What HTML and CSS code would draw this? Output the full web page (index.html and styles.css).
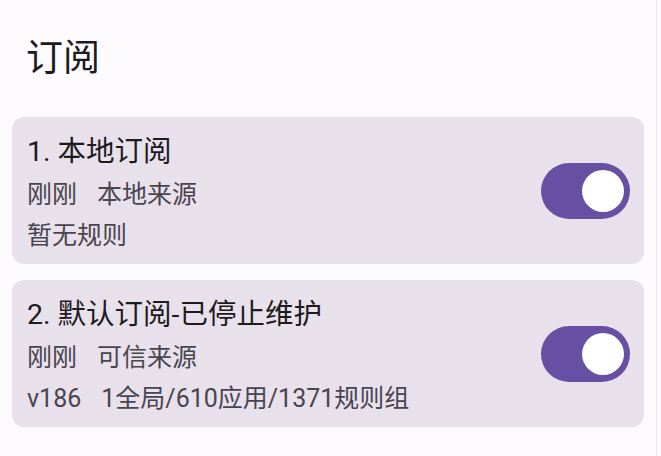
FILE: index.html
```html
<!DOCTYPE html>
<html lang="zh-CN">
<head>
    <meta charset="UTF-8">
    <meta name="viewport" content="width=device-width, initial-scale=1.0">
    <title>订阅</title>
    <link rel="stylesheet" href="styles.css">
</head>
<body>
    <div class="screen">
        <h1 class="page-title">订阅</h1>

        <div class="sub-list">
            <div class="sub-card">
                <div class="sub-info">
                    <div class="sub-name">1. 本地订阅</div>
                    <div class="sub-meta">
                        <span>刚刚</span>
                        <span>本地来源</span>
                    </div>
                    <div class="sub-meta">
                        <span>暂无规则</span>
                    </div>
                </div>
                <div class="switch on"><div class="thumb"></div></div>
            </div>

            <div class="sub-card">
                <div class="sub-info">
                    <div class="sub-name">2. 默认订阅-已停止维护</div>
                    <div class="sub-meta">
                        <span>刚刚</span>
                        <span>可信来源</span>
                    </div>
                    <div class="sub-meta">
                        <span>v186</span>
                        <span>1全局/610应用/1371规则组</span>
                    </div>
                </div>
                <div class="switch on"><div class="thumb"></div></div>
            </div>
        </div>
    </div>
</body>
</html>
```

FILE: styles.css
```css
body {
    margin: 0;
    background-color: #fefbff;
    font-family: Roboto, "Noto Sans CJK SC", sans-serif;
    color: #1d1b20;
}

.screen {
    width: 656px;
    height: 456px;
    border-right: 1px solid #ece8ee;
    overflow: hidden;
}

.page-title {
    margin: 0;
    padding: 34px 0 0 26px;
    height: 50px;
    font-size: 37px;
    font-weight: 400;
    line-height: 50px;
}

.sub-list {
    display: flex;
    flex-direction: column;
    gap: 16px;
    padding: 33px 12px 0 12px;
}

.sub-card {
    display: flex;
    align-items: center;
    background-color: #e8e0eb;
    border-radius: 12px;
    padding: 0 14px 0 15px;
}

.sub-info {
    flex: 1;
    padding: 16px 0 8px 0;
}

.sub-name {
    font-size: 28.5px;
    line-height: 37px;
    margin-bottom: 4px;
    color: #1d1b20;
}

.sub-meta {
    display: flex;
    gap: 20px;
    font-size: 25px;
    line-height: 41px;
    color: #49454f;
}

.switch {
    width: 89px;
    height: 56px;
    border-radius: 28px;
    background-color: #6750a4;
    display: flex;
    align-items: center;
    box-sizing: border-box;
}

.switch.on {
    justify-content: flex-end;
    padding-right: 6px;
}

.thumb {
    width: 42px;
    height: 42px;
    border-radius: 50%;
    background-color: #ffffff;
}
```
